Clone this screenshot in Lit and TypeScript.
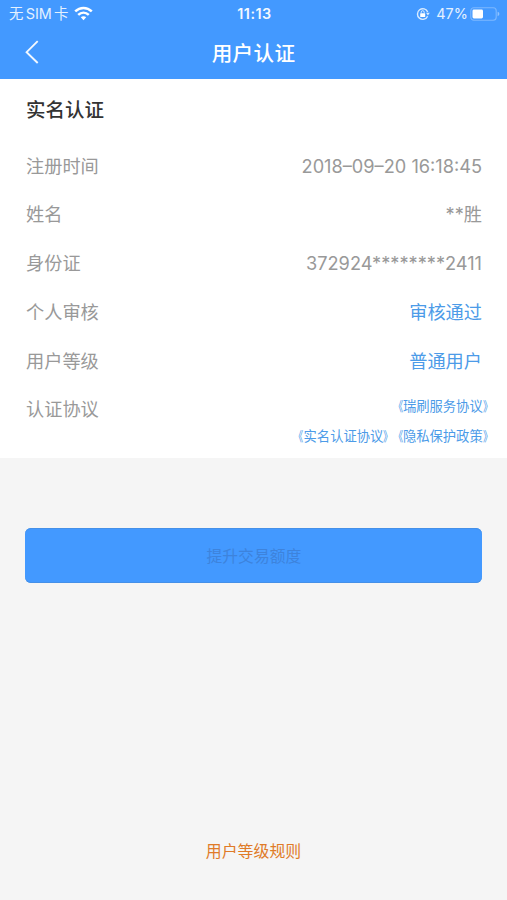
import { LitElement, html, css } from "lit";
import { customElement } from "lit/decorators.js";

const agreement = (name: string) =>
  html`<span class="open">《</span>${name}<span class="close">》</span>`;

@customElement("app-root")
class AppRoot extends LitElement {
  static styles = css`
    :host { display: flex; flex-direction: column; height: 900px; background: #f5f5f5; font-family: Inter, "Noto Sans CJK SC", sans-serif; color: #999; box-sizing: border-box; overflow: hidden; }
    svg { display: block; flex: none; }
    .status { height: 28px; background: #4399ff; color: #e4f1ff; display: grid; grid-template-columns: 1fr auto 1fr; align-items: center; padding: 0 7px 0 9px; font-size: 14.4px; line-height: 28px; box-sizing: border-box; }
    .left, .right { display: flex; align-items: center; white-space: nowrap; }
    .carrier { display: flex; gap: 2.3px; }
    .wifi { margin: -2px 0 0 5px; }
    .right { justify-content: flex-end; }
    .pct { margin: 0 2px 0 6px; letter-spacing: 0.1px; }
    .time { font-weight: 600; font-size: 14.4px; letter-spacing: 0.5px; color: #f2f8ff; }
    .nav { height: 51px; background: #4399ff; color: #fff; display: grid; grid-template-columns: 60px 1fr 60px; align-items: center; }
    .back { margin: -4px 0 0 24px; }
    .title { text-align: center; font-size: 20.6px; font-weight: 500; line-height: 51px; height: 51px; letter-spacing: 0.3px; }
    .panel { background: #fff; height: 379px; padding: 1px 25px 0 26px; box-sizing: border-box; }
    h2 { margin: 0; font-size: 19.5px; line-height: 61px; height: 61.5px; font-weight: 500; color: #333; }
    .row { display: flex; justify-content: space-between; font-size: 18.2px; line-height: 48.8px; height: 48.8px; white-space: nowrap; }
    .blue { color: #4c9be8; }
    .links { font-size: 13.3px; line-height: 30px; padding-top: 6px; text-align: right; margin-right: -10.5px; color: #4c9be8; text-spacing-trim: space-all; }
    .links div { height: 30px; }
    .open, .close { display: inline-block; transform: scaleX(0.73); }
    .open { margin-left: -3.5px; transform-origin: right; }
    .close { margin-right: -3.5px; transform-origin: left; }
    .btn { margin: 70px 24.6px 0 25.4px; padding: 0; height: 55px; flex: none; border: 0; border-radius: 6px; background: #4399ff; color: #3d83dc; font: inherit; font-size: 15.8px; box-shadow: inset 0 1px #4590e8, inset 0 -1px #4590e8; }
    .rules { margin-top: auto; height: 66px; font-size: 15.9px; color: #e07b28; text-align: center; line-height: 36px; }
  `;
  render() {
    return html`
      <div class="status">
        <div class="left">
          <span class="carrier"><span>无</span><span>SIM</span><span>卡</span></span>
          <svg class="wifi" width="19" height="15" viewBox="0 0 19 15" fill="none" stroke="#fff" stroke-width="2.5">
            <path d="M1.2 5.4C6 .8 13 .8 17.8 5.4M4.2 8.9C7.3 6 11.7 6 14.8 8.9" />
            <path d="M6.8 11.3C8.2 10 10.8 10 12.2 11.3L9.5 14.2Z" fill="#fff" stroke="none" />
          </svg>
        </div>
        <span class="time">11:13</span>
        <div class="right">
          <svg width="14" height="14" viewBox="0 0 14 14" fill="none" stroke="#d9ebff" stroke-width="1.4">
            <path d="M11.6 9.2A5.3 5.3 0 1 1 11.7 5.1" />
            <path d="M10 5.8H13.8L11.9 8.6Z" fill="#d9ebff" stroke="none" />
            <rect x="4.2" y="6.2" width="5" height="3.8" rx=".5" fill="#fff" stroke="none" />
            <path d="M5.2 6.5V5.2A1.5 1.5 0 0 1 8.2 5.2V6.5" stroke-width="1" />
          </svg>
          <span class="pct">47%</span>
          <svg width="30" height="14" viewBox="0 0 30 14">
            <rect x=".8" y=".8" width="25.4" height="12.4" rx="3" fill="none" stroke="#7db8ff" stroke-width="1.1" />
            <rect x="2.5" y="2.5" width="10.5" height="9" rx="1.4" fill="#fff" />
            <path d="M27.6 4.8Q29.4 5.4 29.4 7T27.6 9.2Z" fill="#8fc3ff" />
          </svg>
        </div>
      </div>
      <div class="nav">
        <svg class="back" width="16" height="24" viewBox="0 0 16 24" fill="none" stroke="#f2f8ff" stroke-width="1.9"><path d="M13.7 1.2L2.6 12.2L13.7 23" /></svg>
        <span class="title">用户认证</span>
      </div>
      <section class="panel">
        <h2>实名认证</h2>
        <div class="row"><span>注册时间</span><span>2018–09–20 16:18:45</span></div>
        <div class="row"><span>姓名</span><span>**胜</span></div>
        <div class="row"><span>身份证</span><span>372924********2411</span></div>
        <div class="row"><span>个人审核</span><span class="blue">审核通过</span></div>
        <div class="row"><span>用户等级</span><span class="blue">普通用户</span></div>
        <div class="row"><span>认证协议</span><div class="links"><div>${agreement("瑞刷服务协议")}</div><div>${agreement("实名认证协议")}${agreement("隐私保护政策")}</div></div></div>
      </section>
      <button class="btn">提升交易额度</button>
      <div class="rules">用户等级规则</div>
    `;
  }
}
